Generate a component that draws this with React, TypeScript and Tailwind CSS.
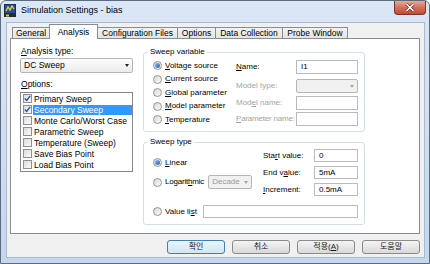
import React from 'react';

const font = "font-['Liberation_Sans','Noto_Sans_CJK_KR',sans-serif]";

const tabs = [
    { label: 'General', w: 'w-[38px]' },
    { label: 'Analysis', w: 'w-[49px]', active: true },
    { label: 'Configuration Files', w: 'w-[81px]' },
    { label: 'Options', w: 'w-[39px]' },
    { label: 'Data Collection', w: 'w-[68px]' },
    { label: 'Probe Window', w: 'w-[66px]' },
];

const options = [
    { label: 'Primary Sweep', checked: true },
    { label: 'Secondary Sweep', checked: true, selected: true },
    { label: 'Monte Carlo/Worst Case' },
    { label: 'Parametric Sweep' },
    { label: 'Temperature (Sweep)' },
    { label: 'Save Bias Point' },
    { label: 'Load Bias Point' },
];

const U = ({ children }: { children: React.ReactNode }) => <span className="underline underline-offset-1">{children}</span>;

const Radio = ({ checked }: { checked?: boolean }) => (
    <span className="w-[9px] h-[9px] shrink-0 rounded-full border border-[#959595] bg-linear-to-br from-[#d8d8d8] to-[#fbfbfb] flex items-center justify-center">
        {checked && <span className="w-[5px] h-[5px] rounded-full bg-linear-to-br from-[#8bc0f0] to-[#1c5fb0]" />}
    </span>
);

const Check = ({ checked }: { checked?: boolean }) => (
    <span className="w-[9px] h-[9px] shrink-0 border border-[#8f8f8f] bg-linear-to-br from-[#dcdcdc] to-[#fbfbfb] flex items-center justify-center">
        {checked && (
            <svg width="7" height="7" viewBox="0 0 7 7">
                <path d="M0.8 3.4 L2.7 5.4 L6.2 0.8" fill="none" stroke="#2a4fa3" strokeWidth="1.4" />
            </svg>
        )}
    </span>
);

const Input = ({ w, value }: { w: string; value?: string }) => (
    <div className={`${w} h-full shrink-0 border border-[#b8bcc2] bg-white pl-[4px] flex items-center text-black`}>
        {value}
    </div>
);

const Combo = ({ w, value, disabled }: { w: string; value?: string; disabled?: boolean }) => (
    <div className={`${w} h-full shrink-0 border border-[#b3b6ba] rounded-[2px] flex items-center justify-between pl-[3px] pr-[3px] ${disabled ? 'bg-[#f1f1f1] text-[#9a9a9a]' : 'bg-linear-to-b from-[#fcfcfc] to-[#ebebeb] text-black'}`}>
        <span>{value}</span>
        <span className={`w-0 h-0 border-l-[2.5px] border-r-[2.5px] border-t-[3px] border-l-transparent border-r-transparent ${disabled ? 'border-t-[#a6a6a6]' : 'border-t-[#222]'}`} />
    </div>
);

const Button = ({ children, primary }: { children: React.ReactNode; primary?: boolean }) => (
    <div className={`w-[58px] h-full rounded-[3px] border flex items-center justify-center text-[#1a1a1a] text-[8px] ${primary ? 'border-[#3c7fb1] bg-linear-to-b from-[#eaf6fd] to-[#cfe6f5]' : 'border-[#8a8a8a] bg-linear-to-b from-[#f4f4f4] to-[#d9d9d9]'}`}>
        {children}
    </div>
);

export default function App() {
    return (
        <div className={`w-[430px] h-[264px] flex flex-col border border-[#5d6b7e] rounded-t-[6px] bg-linear-to-b from-[#dbe7f6] to-[#c4d7ef] text-[8.5px] leading-none ${font}`}>

            {/* Title bar */}
            <div className="h-[21px] shrink-0 flex items-start">
                <svg className="mt-[3px] ml-[3px]" width="12" height="13" viewBox="0 0 12 13">
                    <rect x="0.5" y="0.5" width="11" height="9" fill="#2b4f9c" stroke="#1a2b55" />
                    <path d="M2 7 L4 3 L6 6 L8 2 L10 5" fill="none" stroke="#f5d634" strokeWidth="1.2" />
                    <rect x="0" y="10" width="12" height="3" fill="#2a2a2a" />
                    <rect x="2" y="10.5" width="3" height="2" fill="#e8c530" />
                </svg>
                <span className="mt-[5px] ml-[5px] text-[9px] text-black">Simulation Settings - bias</span>
                <div className="ml-auto mr-[3px] w-[32px] h-[14px] rounded-b-[4px] border border-[#7d3328] border-t-0 bg-linear-to-b from-[#e8a99b] via-[#d3705d] to-[#c24a35] flex items-center justify-center">
                    <svg width="10" height="9" viewBox="0 0 10 9">
                        <path d="M1.5 1 L8.5 8 M8.5 1 L1.5 8" stroke="#6a2a20" strokeWidth="3" />
                        <path d="M1.5 1 L8.5 8 M8.5 1 L1.5 8" stroke="#ffffff" strokeWidth="1.6" />
                    </svg>
                </div>
            </div>

            {/* Client area */}
            <div className="ml-[5px] mr-[4px] h-[236px] shrink-0 border border-[#a9bbd3] bg-[#f0f0f0] flex flex-col text-black">

                {/* Tabs */}
                <div className="h-[15px] flex items-end pl-[5px]">
                    {tabs.map((t, i) => (
                        <div
                            key={t.label}
                            className={`${t.w} ${i > 0 ? '-ml-px' : ''} flex items-center justify-center whitespace-nowrap border-l border-t border-r border-[#898c95] ${t.active ? 'h-[15px] -mb-px relative z-10 bg-white' : 'h-[11px] bg-linear-to-b from-[#f3f3f3] to-[#e3e3e3]'}`}
                        >
                            {t.label}
                        </div>
                    ))}
                </div>

                {/* Tab panel */}
                <div className="ml-[3px] mr-[4px] h-[196px] border border-[#898c95] bg-white flex">

                    {/* Left column */}
                    <div className="ml-[9px] mt-[7px] w-[113px] flex flex-col">
                        <div className="h-[10px] leading-[10px] pl-px"><U>A</U>nalysis type:</div>
                        <div className="mt-[2px] h-[15px]">
                            <Combo w="w-[113px]" value="DC Sweep" />
                        </div>
                        <div className="mt-[6px] h-[10px] leading-[10px] pl-px"><U>O</U>ptions:</div>
                        <div className="mt-[3px] h-[80px] border border-[#828790] bg-white pl-[2px] flex flex-col">
                            {options.map((o) => (
                                <div key={o.label} className="h-[11px] flex items-center gap-[1px]">
                                    <Check checked={o.checked} />
                                    <span className={`flex-1 h-[10px] leading-[10px] pl-px whitespace-nowrap ${o.selected ? 'bg-[#3399ff] text-white' : ''}`}>{o.label}</span>
                                </div>
                            ))}
                        </div>
                    </div>

                    {/* Right column */}
                    <div className="ml-[10px] mt-[8px] w-[222px] flex flex-col text-[8px] whitespace-nowrap">

                        <fieldset className="h-[85px] border border-[#d5dfe5] rounded-[3px] flex">
                            <legend className="ml-[4px] px-[2px] h-[10px] leading-[10px]">Sweep variable</legend>
                            <div className="flex">
                                <div className="w-[92px] pl-[9px] pt-[2px] flex flex-col">
                                    <div className="h-[13.5px] flex items-center gap-[3px]"><Radio checked /><span><U>V</U>oltage source</span></div>
                                    <div className="h-[13.5px] flex items-center gap-[3px]"><Radio /><span><U>C</U>urrent source</span></div>
                                    <div className="h-[13.5px] flex items-center gap-[3px]"><Radio /><span><U>G</U>lobal parameter</span></div>
                                    <div className="h-[13.5px] flex items-center gap-[3px]"><Radio /><span><U>M</U>odel parameter</span></div>
                                    <div className="h-[13.5px] flex items-center gap-[3px]"><Radio /><span><U>T</U>emperature</span></div>
                                </div>
                                <div className="pt-[3px] flex flex-col">
                                    <div className="h-[14px] flex items-center">
                                        <span className="w-[60px]"><U>N</U>ame:</span>
                                        <Input w="w-[62px]" value="I1" />
                                    </div>
                                    <div className="mt-[5px] h-[14px] flex items-center text-[#a3a3a3]">
                                        <span className="w-[60px]">Model type:</span>
                                        <Combo w="w-[62px]" disabled />
                                    </div>
                                    <div className="mt-[3px] h-[14px] flex items-center text-[#a3a3a3]">
                                        <span className="w-[60px]">Mod<U>e</U>l name:</span>
                                        <Input w="w-[62px]" />
                                    </div>
                                    <div className="mt-[2px] h-[14px] flex items-center text-[#a3a3a3]">
                                        <span className="w-[60px] tracking-[-0.2px]"><U>P</U>arameter name:</span>
                                        <Input w="w-[62px]" />
                                    </div>
                                </div>
                            </div>
                        </fieldset>

                        <fieldset className="mt-[5px] h-[88px] border border-[#d5dfe5] rounded-[3px] flex flex-col">
                            <legend className="ml-[4px] px-[2px] h-[10px] leading-[10px]">Sweep type</legend>
                            <div className="flex">
                                <div className="w-[119px] pl-[9px] flex flex-col">
                                    <div className="mt-[9px] h-[13px] flex items-center gap-[3px]"><Radio checked /><span><U>L</U>inear</span></div>
                                    <div className="mt-[6px] h-[14px] flex items-center">
                                        <Radio />
                                        <span className="ml-[3px] shrink-0 tracking-[-0.2px]">Logarit<U>h</U>mic</span>
                                        <div className="ml-[4px] h-full">
                                            <Combo w="w-[44px]" value="Decade" disabled />
                                        </div>
                                    </div>
                                </div>
                                <div className="pt-[2px] flex flex-col">
                                    <div className="h-[13px] flex items-center">
                                        <span className="w-[51px]">Sta<U>r</U>t value:</span>
                                        <Input w="w-[44px]" value="0" />
                                    </div>
                                    <div className="mt-[4px] h-[13px] flex items-center">
                                        <span className="w-[51px]">End v<U>a</U>lue:</span>
                                        <Input w="w-[44px]" value="5mA" />
                                    </div>
                                    <div className="mt-[4px] h-[13px] flex items-center">
                                        <span className="w-[51px]"><U>I</U>ncrement:</span>
                                        <Input w="w-[44px]" value="0.5mA" />
                                    </div>
                                </div>
                            </div>
                            <div className="mt-[9px] h-[13px] pl-[9px] flex items-center">
                                <Radio />
                                <span className="ml-[3px] w-[38px]">Value li<U>s</U>t</span>
                                <Input w="w-[155px]" />
                            </div>
                        </fieldset>
                    </div>
                </div>

                {/* Dialog buttons */}
                <div className="mt-[6px] h-[14px] pr-[4px] flex justify-end gap-[7px]">
                    <Button primary>확인</Button>
                    <Button>취소</Button>
                    <Button>적용(<U>A</U>)</Button>
                    <Button>도움말</Button>
                </div>
            </div>
        </div>
    );
}
